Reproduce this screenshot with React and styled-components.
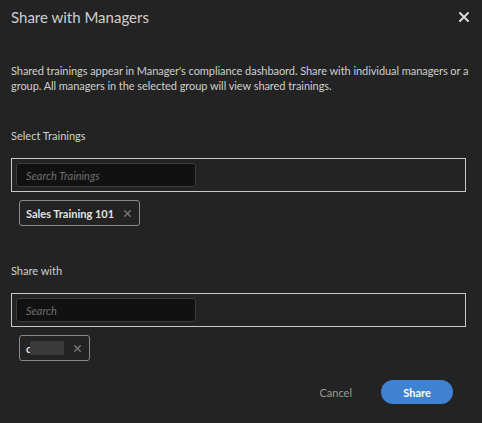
import React from "react";
import styled, { createGlobalStyle } from "styled-components";

const GlobalStyle = createGlobalStyle`
  html, body {
    margin: 0;
    padding: 0;
    background: #232323;
  }
  body {
    font-family: Lato, "Open Sans", sans-serif;
    color: #d6d6d6;
  }
`;

const Dialog = styled.div`
  width: 482px;
  height: 423px;
  box-sizing: border-box;
  padding: 0 16px 0 11px;
  display: flex;
  flex-direction: column;
  background: #232323;
`;

const Header = styled.div`
  display: flex;
  align-items: center;
  justify-content: space-between;
  height: 34px;
`;

const Title = styled.h1`
  margin: 0;
  font-size: 15px;
  font-weight: 400;
  color: #cfcfcf;
`;

const CloseButton = styled.button`
  border: 0;
  background: none;
  padding: 0;
  width: 14px;
  height: 14px;
  display: flex;
  align-items: center;
  justify-content: center;
  color: #d8d8d8;
  cursor: pointer;
  margin-right: -5px;
`;

const Description = styled.p`
  margin: 29px 0 0;
  font-size: 11px;
  line-height: 15px;
  color: #cfcfcf;
  letter-spacing: -0.06px;
  width: 472px;
`;

const Label = styled.div`
  margin-top: ${(p) => p.$top}px;
  font-size: 11px;
  line-height: 14px;
  color: #d0d0d0;
`;

const PickerBox = styled.div`
  margin-top: 15px;
  width: 455px;
  height: 34px;
  box-sizing: border-box;
  border: 1px solid #c8c8c8;
  padding: 4px;
`;

const SearchInput = styled.input`
  width: 180px;
  height: 24px;
  box-sizing: border-box;
  background: #111;
  border: 1px solid #3d3d3d;
  border-radius: 3px;
  padding: 0 9px;
  color: #ddd;
  font-family: inherit;
  font-size: 11px;
  outline: none;
  &::placeholder {
    color: #6e6e6e;
    font-style: italic;
  }
`;

const ChipList = styled.div`
  display: flex;
  gap: 6px;
  padding: 8px 0 0 8px;
`;

const Chip = styled.div`
  display: inline-flex;
  align-items: center;
  height: 26px;
  box-sizing: border-box;
  border: 1px solid #8a8a8a;
  border-radius: 3px;
  padding: 0 8px 0 6px;
  gap: 10px;
  font-size: 11px;
  font-weight: 700;
  color: #e2e2e2;
`;

const Redacted = styled.span`
  display: inline-flex;
  align-items: center;
  &::after {
    content: "";
    display: inline-block;
    width: 34px;
    height: 14px;
    background: #3a3a3a;
    margin-left: -1px;
  }
`;

const ChipRemove = styled.span`
  display: flex;
  color: #7a7a7a;
`;

const Footer = styled.div`
  display: flex;
  justify-content: flex-end;
  align-items: center;
  gap: 29px;
  margin-top: 19px;
  padding-right: 13px;
`;

const TextButton = styled.button`
  border: 0;
  background: none;
  padding: 0;
  font-family: inherit;
  font-size: 11px;
  color: #9a9a9a;
  cursor: pointer;
`;

const PrimaryButton = styled.button`
  border: 0;
  width: 72px;
  height: 24px;
  border-radius: 12px;
  background: #3f82d1;
  color: #fff;
  font-family: inherit;
  font-size: 11px;
  font-weight: 700;
  cursor: pointer;
`;

const XIcon = ({ size, weight }) => (
  <svg width={size} height={size} viewBox="0 0 10 10" fill="none">
    <path d="M1 1L9 9M9 1L1 9" stroke="currentColor" strokeWidth={weight} strokeLinecap="square" />
  </svg>
);

const App = () => {
  return (
    <>
      <GlobalStyle />
      <Dialog>
        <Header>
          <Title>Share with Managers</Title>
          <CloseButton aria-label="Close">
            <XIcon size={10} weight={2} />
          </CloseButton>
        </Header>
        <Description>
          Shared trainings appear in Manager's compliance dashbaord. Share with individual managers or a
          group. All managers in the selected group will view shared trainings.
        </Description>

        <Label $top={36}>Select Trainings</Label>
        <PickerBox>
          <SearchInput placeholder="Search Trainings" />
        </PickerBox>
        <ChipList>
          <Chip>
            Sales Training 101
            <ChipRemove><XIcon size={7} weight={1.8} /></ChipRemove>
          </Chip>
        </ChipList>

        <Label $top={38}>Share with</Label>
        <PickerBox>
          <SearchInput placeholder="Search" />
        </PickerBox>
        <ChipList>
          <Chip>
            <Redacted>c</Redacted>
            <ChipRemove><XIcon size={7} weight={1.8} /></ChipRemove>
          </Chip>
        </ChipList>

        <Footer>
          <TextButton>Cancel</TextButton>
          <PrimaryButton>Share</PrimaryButton>
        </Footer>
      </Dialog>
    </>
  );
};

export default App;
